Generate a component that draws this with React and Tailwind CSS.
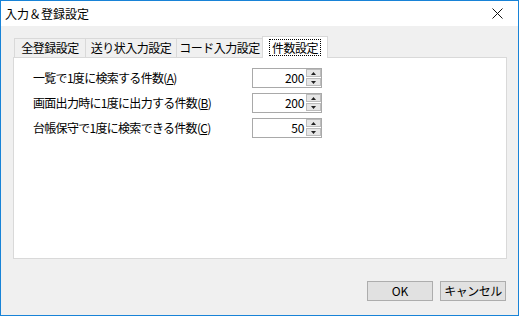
import React from "react";

const F = { fontFamily: '"Noto Sans CJK JP", "Noto Sans", sans-serif' };

function Spin({ value }) {
  return (
    <div className="flex h-[20px] w-[70px] border border-[#a9a9a9] bg-white">
      <div className="flex-1 pr-[2px] text-right text-[12px] leading-[18px] tracking-[-0.3px] text-black">{value}</div>
      <div className="flex w-[15px] flex-col gap-[1px] bg-white">
        <div className="flex h-[8px] items-center justify-center border border-[#bcbcbc] bg-[#e6e6e6]">
          <svg width="5" height="3" viewBox="0 0 5 3"><path d="M2.5 0 L5 3 L0 3 Z" fill="#202020" /></svg>
        </div>
        <div className="flex h-[8px] items-center justify-center border border-[#bcbcbc] bg-[#e6e6e6]">
          <svg width="5" height="3" viewBox="0 0 5 3"><path d="M0 0 L5 0 L2.5 3 Z" fill="#202020" /></svg>
        </div>
      </div>
    </div>
  );
}

function Row({ label, mn, value }) {
  return (
    <div className="flex h-[20px] items-center">
      <div className="w-[219px] text-[12px] tracking-[-0.7px] text-black">
        {label}(<span className="underline">{mn}</span>)
      </div>
      <Spin value={value} />
    </div>
  );
}

export default function App() {
  return (
    <div style={F} className="flex h-[316px] w-[519px] flex-col border border-[#1883d7] bg-[#f0f0f0] text-black">
      <div className="flex h-[25px] items-center justify-between bg-white pl-[4px]">
        <span className="text-[12px]">入力＆登録設定</span>
        <div className="flex w-[42px] items-center justify-center">
          <svg width="11" height="11" viewBox="0 0 11 11">
            <path d="M0.5 0.5 L10.5 10.5 M10.5 0.5 L0.5 10.5" stroke="#111" strokeWidth="1" />
          </svg>
        </div>
      </div>
      <div className="flex flex-1 flex-col px-[12px] pt-[10px]">
        <div className="flex h-[21px] items-end pl-[1px] text-[12px] tracking-[-0.5px]">
          <div className="flex h-[19px] w-[72px] items-center justify-center border border-b-0 border-[#d9d9d9]">全登録設定</div>
          <div className="-ml-px flex h-[19px] w-[92px] items-center justify-center border border-b-0 border-[#d9d9d9]">送り状入力設定</div>
          <div className="-ml-px flex h-[19px] w-[87px] items-center justify-center border border-b-0 border-[#d9d9d9]">コード入力設定</div>
          <div className="relative z-10 -mb-px -ml-px flex h-[22px] w-[66px] items-center justify-center border border-b-0 border-[#d9d9d9] bg-white pb-[1px]">
            <span className="border border-dotted border-black px-[2px] leading-[15px]">件数設定</span>
          </div>
        </div>
        <div className="flex h-[202px] w-[494px] flex-col gap-[5px] border border-[#d9d9d9] bg-white pl-[19px] pt-[10px]">
          <Row label="一覧で1度に検索する件数" mn="A" value="200" />
          <Row label="画面出力時に1度に出力する件数" mn="B" value="200" />
          <Row label="台帳保守で1度に検索できる件数" mn="C" value="50" />
        </div>
        <div className="mt-[22px] flex justify-end gap-[7px]">
          <button className="h-[20px] w-[66px] border border-[#adadad] bg-[#e1e1e1] text-[12px] leading-[18px]">OK</button>
          <button className="h-[20px] w-[66px] border border-[#adadad] bg-[#e1e1e1] text-[12px] leading-[18px] tracking-[-0.5px]">キャンセル</button>
        </div>
      </div>
    </div>
  );
}
